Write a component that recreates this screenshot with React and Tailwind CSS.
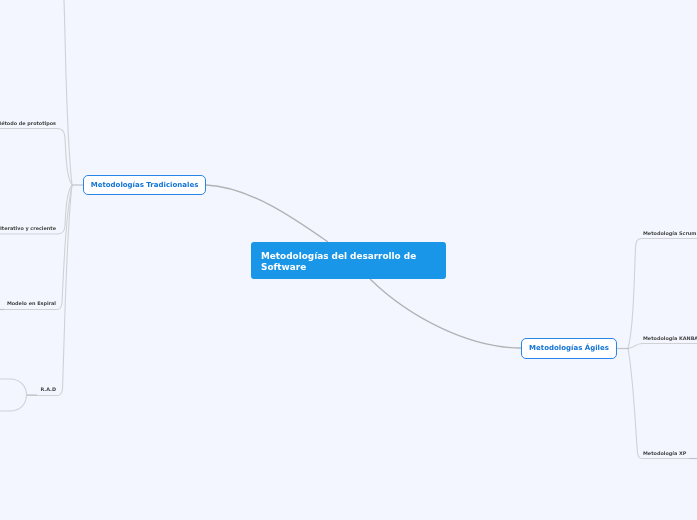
export default function App() {
  const font = { fontFamily: '"DejaVu Sans", sans-serif' };
  const label = "absolute text-[4.9px] leading-[8px] font-bold whitespace-nowrap text-[#454545] blur-[0.3px]";
  return (
    <div className="relative w-[697px] h-[520px] overflow-hidden bg-[#f3f6ff]" style={font}>
      <svg className="absolute inset-0" width="697" height="520" fill="none">
        <g stroke="#b2b2b4" strokeWidth="1.3">
          <path d="M206 185 C250 187 295 219 328 242" />
          <path d="M370 279 C410 318 470 348 521 348" />
        </g>
        <g stroke="#d0d1d5" strokeWidth="1.1">
          <path d="M64 0 C66 60 66 130 72 185" />
          <path d="M0 128.500 H57 C63 128.500 64.500 132 65 138 C66 160 67 178 72 185" />
          <path d="M0 234 H57 C63 234 64.500 231 65 226 C66 205 67 192 72 185" />
          <path d="M0 309.500 H57 C60.500 309.500 61.500 307 62 303 C64 260 66 215 72 185" />
          <path d="M27 395.500 H57 C61 395.500 62 393 62.500 389 C65 320 66 240 72 185" />
          <path d="M0 379 H10 C20 379 26.500 386 26.500 395 C26.500 404 20 411 10 411 H0" />
          <path d="M697 238.500 H642 C637 238.500 636 241 635.500 247 C634 290 633 330 628 348.500" />
          <path d="M697 343.500 H642 C636 343.500 634 348 628 348.500" />
          <path d="M697 458.500 H642 C639 458.500 638 456 637.500 453 C635 420 633 375 628 348.500" />
        </g>
        <g stroke="#c2c3c7" strokeWidth="1.2">
          <path d="M72 185 H83" />
          <path d="M617 348.500 H629" />
          <path d="M27 395 H37" />
          <path d="M0 309.500 H4" />
          <path d="M689 458.500 H697" />
        </g>
      </svg>

      <div className="absolute left-[251px] top-[242px] w-[195px] h-[37px] rounded-[3px] bg-[#1a96e8] pl-[10px] pt-[8.500px] text-[8.9px] leading-[11px] font-bold text-white">
        <div className="blur-[0.15px]">Metodologías del desarrollo de<br />Software</div>
      </div>

      <div className="absolute left-[83px] top-[175px] w-[123px] h-[20px] rounded-[5px] border-[1.5px] border-[#2a86e6] bg-white flex items-center justify-center text-[7px] font-bold text-[#1273d6] whitespace-nowrap">
        <span className="blur-[0.2px]">Metodologías Tradicionales</span>
      </div>
      <div className="absolute left-[521px] top-[338px] w-[96px] h-[21px] rounded-[5px] border-[1.5px] border-[#2a86e6] bg-white flex items-center justify-center text-[7px] font-bold text-[#1273d6] whitespace-nowrap">
        <span className="blur-[0.2px]">Metodologías Ágiles</span>
      </div>

      <div className={`${label} right-[641px] top-[119px]`}>Método de prototipos</div>
      <div className={`${label} right-[641px] top-[224px]`}>Iterativo y creciente</div>
      <div className={`${label} right-[641px] top-[299px]`}>Modelo en Espiral</div>
      <div className={`${label} right-[641px] top-[385px]`}>R.A.D</div>
      <div className={`${label} left-[643px] top-[229px]`}>Metodología Scrum</div>
      <div className={`${label} left-[643px] top-[334px]`}>Metodología KANBAN</div>
      <div className={`${label} left-[643px] top-[449px]`}>Metodología XP</div>
    </div>
  );
}
